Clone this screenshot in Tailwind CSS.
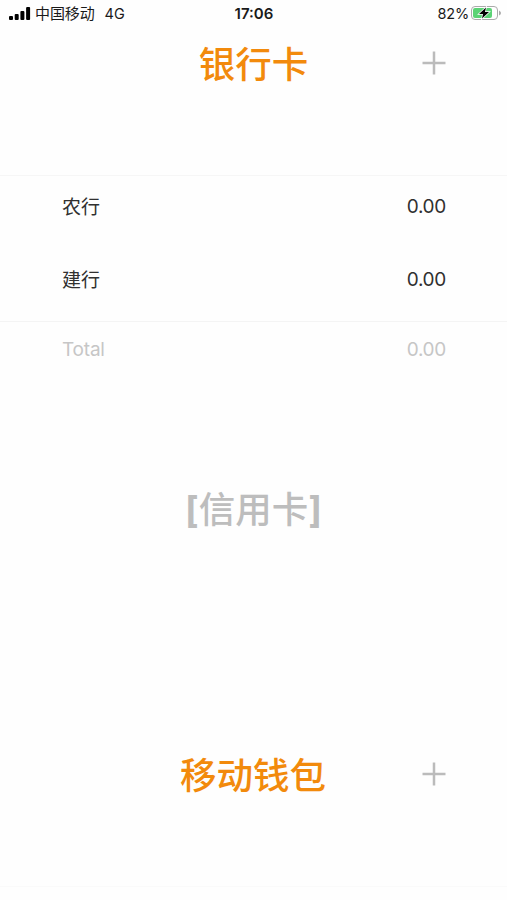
<!DOCTYPE html>
<html lang="zh-CN">
<head>
  <meta charset="UTF-8" />
  <meta name="viewport" content="width=device-width, initial-scale=1.0" />
  <title>银行卡</title>
  <script src="https://cdn.jsdelivr.net/npm/@tailwindcss/browser@4"></script>
</head>
<body class="h-[900px] overflow-hidden bg-[#fefefe] font-['Inter','Noto_Sans_CJK_SC',sans-serif] text-[#303030]">
  <!-- Status bar -->
  <header class="grid h-7 grid-cols-3 items-center pl-[9px] pr-[6px] text-[14px] leading-7 text-[#1a1a1a]">
    <div class="flex items-center whitespace-nowrap">
      <svg class="mr-[4px] mb-px h-[13px] w-[22px]" viewBox="0 0 22 13" fill="#000">
        <rect x="0" y="9" width="4" height="4" rx="1" />
        <rect x="5.700" y="7" width="4" height="6" rx="1" />
        <rect x="11.400" y="4" width="4" height="9" rx="1" />
        <rect x="17.100" y="0" width="4" height="13" rx="1" />
      </svg>
      <span class="text-[15px] tracking-[-0.1px]">中国移动</span>
      <span class="ml-[10px] text-[14.500px]">4G</span>
    </div>
    <div class="pr-[2px] text-center text-[15px] font-semibold">17:06</div>
    <div class="flex items-center justify-end">
      <span class="text-[14.500px] tracking-[-0.2px]">82%</span>
      <svg class="ml-[2px] mb-[2px] h-[14px] w-[30px]" viewBox="0 0 30 14">
        <rect x="0.500" y="0.500" width="26" height="13" rx="3.500" fill="none" stroke="#aaa" />
        <rect x="2" y="2" width="19" height="10" rx="2" fill="#5bd375" />
        <path d="M28 4.500v5q2-1 2-2.500t-2-2.500" fill="#aaa" />
        <path d="M15 1.500 8 8h4L11 12.500l7-6.500h-4z" fill="#000" stroke="#fff" stroke-width="1.500" paint-order="stroke" />
      </svg>
    </div>
  </header>

  <!-- Bank cards -->
  <section class="h-[427px]">
    <div class="grid h-[148px] grid-cols-[1fr_auto_1fr] items-start border-b border-[#f6f6f6] pr-[62px]">
      <h2 class="col-start-2 ml-[62px] pt-px text-[36.500px] font-medium leading-[72px] text-[#f28a0c]">银行卡</h2>
      <button class="mt-[23px] mr-[-1px] justify-self-end text-[#bbb]">
        <svg class="size-6" viewBox="0 0 24 24" fill="none" stroke="currentColor" stroke-width="2.500"><path d="M12 0.500v23M0.500 12h23" /></svg>
      </button>
    </div>
    <div class="flex h-[73px] justify-between px-[62px] text-[19px] leading-[62px]">
      <span class="pt-px">农行</span><span class="mr-[-1px] tracking-[-0.3px]">0.00</span>
    </div>
    <div class="flex h-[73px] justify-between border-b border-[#f4f4f4] px-[62px] text-[19px] leading-[62px]">
      <span class="pt-px">建行</span><span class="mr-[-1px] tracking-[-0.3px]">0.00</span>
    </div>
    <div class="flex justify-between px-[62px] text-[19px] leading-[56px] text-[#c6c6c6]">
      <span class="tracking-[-0.2px]">Total</span><span class="mr-[-1px] tracking-[-0.3px]">0.00</span>
    </div>
  </section>

  <!-- Credit cards -->
  <section class="h-[276px] pt-[19px] text-center text-[36.500px] leading-[72px] text-[#bdbdbd]">
    <h2><span class="font-bold">[</span><span class="font-medium">信用卡</span><span class="font-bold">]</span></h2>
  </section>

  <!-- Mobile wallet -->
  <section class="grid h-[156px] grid-cols-[1fr_auto_1fr] items-start border-b border-[#fafafa] pt-[8px] pr-[62px]">
    <h2 class="col-start-2 ml-[61px] pt-px text-[36.500px] font-medium leading-[72px] text-[#f28a0c]">移动钱包</h2>
    <button class="mt-[23px] mr-[-1px] justify-self-end text-[#bbb]">
      <svg class="size-6" viewBox="0 0 24 24" fill="none" stroke="currentColor" stroke-width="2.500"><path d="M12 0.500v23M0.500 12h23" /></svg>
    </button>
  </section>
</body>
</html>
